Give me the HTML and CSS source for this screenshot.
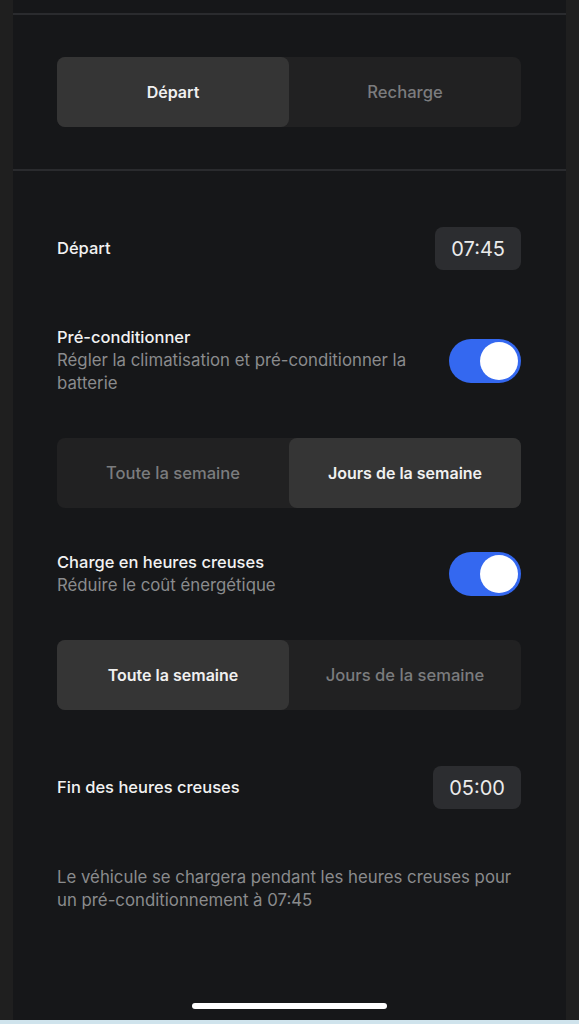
FILE: index.html
```html
<!DOCTYPE html>
<html lang="fr">
<head>
  <meta charset="UTF-8" />
  <meta name="viewport" content="width=device-width, initial-scale=1.0"/>
  <title>Départ et recharge</title>
  <link rel="stylesheet" href="styles.css">
</head>
<body>
  <div class="screen">
    <div class="tabs-section">
      <div class="segmented">
        <div class="seg active">Départ</div>
        <div class="seg">Recharge</div>
      </div>
    </div>

    <div class="settings">
      <div class="row">
        <div class="title">Départ</div>
        <div class="time">07:45</div>
      </div>

      <div class="row gap-lg">
        <div class="text">
          <div class="title">Pré-conditionner</div>
          <div class="subtitle">Régler la climatisation et pré-conditionner la batterie</div>
        </div>
        <div class="toggle on"><span class="knob"></span></div>
      </div>

      <div class="segmented gap-md">
        <div class="seg">Toute la semaine</div>
        <div class="seg active">Jours de la semaine</div>
      </div>

      <div class="row gap-md">
        <div class="text">
          <div class="title">Charge en heures creuses</div>
          <div class="subtitle">Réduire le coût énergétique</div>
        </div>
        <div class="toggle on"><span class="knob"></span></div>
      </div>

      <div class="segmented gap-md">
        <div class="seg active">Toute la semaine</div>
        <div class="seg">Jours de la semaine</div>
      </div>

      <div class="row gap-lg">
        <div class="title">Fin des heures creuses</div>
        <div class="time">05:00</div>
      </div>

      <p class="note">Le véhicule se chargera pendant les heures creuses pour un pré-conditionnement à 07:45</p>
    </div>

    <div class="home-bar"></div>
  </div>
  <div class="bottom-strip"></div>
</body>
</html>
```

FILE: styles.css
```css
body {
  margin: 0;
  background: #1f1f1f;
  font-family: Inter, "Noto Sans", sans-serif;
  color: #eeeeee;
}
.screen {
  position: relative;
  margin: 0 13px;
  height: 1020px;
  background: #161719;
  box-sizing: border-box;
  border-top: 13px solid #161719;
}
.tabs-section {
  border-top: 2px solid #2a2b2e;
  border-bottom: 2px solid #2a2b2e;
  padding: 42px 45px 42px 44px;
}
.segmented {
  display: grid;
  grid-template-columns: 1fr 1fr;
  height: 70px;
  background: #212122;
  border-radius: 8px;
}
.seg {
  display: flex;
  align-items: center;
  justify-content: center;
  font-size: 16.6px;
  font-weight: 500;
  color: #7b7c7e;
  border-radius: 8px;
}
.seg.active {
  background: #353535;
  color: #f0f0f0;
  font-size: 16px;
  font-weight: 600;
}
.settings {
  padding: 56px 45px 0 44px;
}
.row {
  display: flex;
  align-items: center;
  justify-content: space-between;
  gap: 40px;
}
.gap-lg {
  margin-top: 56px;
}
.gap-md {
  margin-top: 43px;
}
.title {
  font-size: 16.5px;
  font-weight: 500;
  line-height: 23px;
  color: #f2f2f2;
}
.subtitle {
  font-size: 16.8px;
  line-height: 23px;
  color: #8a8b8d;
}
.time {
  height: 43px;
  padding: 0 16px;
  display: flex;
  align-items: center;
  background: #2c2d30;
  border-radius: 8px;
  font-size: 20px;
  color: #ebebeb;
}
.toggle {
  flex: none;
  width: 72px;
  height: 44px;
  border-radius: 22px;
  background: #3a3b3e;
  display: flex;
  align-items: center;
  padding: 0 3px;
  box-sizing: border-box;
}
.toggle.on {
  background: #3468f0;
  justify-content: flex-end;
}
.knob {
  width: 38px;
  height: 38px;
  border-radius: 50%;
  background: #ffffff;
}
.note {
  margin: 57px 0 0;
  font-size: 16.8px;
  line-height: 23px;
  color: #8a8b8d;
}
.home-bar {
  position: absolute;
  left: 179px;
  bottom: 11px;
  width: 195px;
  height: 6px;
  border-radius: 3px;
  background: #ffffff;
}
.bottom-strip {
  height: 4px;
  background: #cfe3ec;
}
```
